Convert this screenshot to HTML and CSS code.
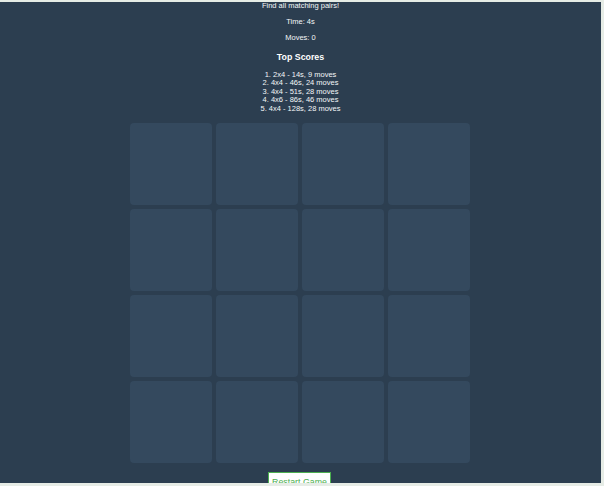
FILE: index.html
```html
<!DOCTYPE html>
<html lang="en">
<head>
<meta charset="utf-8">
<title>Memory Game</title>
<link rel="stylesheet" href="styles.css">
</head>
<body>
<div class="app">
  <p class="line first">Find all matching pairs!</p>
  <p class="line">Time: 4s</p>
  <p class="line">Moves: 0</p>
  <h3 class="scores-title">Top Scores</h3>
  <div class="scores">
    <div>1. 2x4 - 14s, 9 moves</div>
    <div>2. 4x4 - 46s, 24 moves</div>
    <div>3. 4x4 - 51s, 28 moves</div>
    <div>4. 4x6 - 86s, 46 moves</div>
    <div>5. 4x4 - 128s, 28 moves</div>
  </div>
  <div class="board">
    <div class="card"></div><div class="card"></div><div class="card"></div><div class="card"></div>
    <div class="card"></div><div class="card"></div><div class="card"></div><div class="card"></div>
    <div class="card"></div><div class="card"></div><div class="card"></div><div class="card"></div>
    <div class="card"></div><div class="card"></div><div class="card"></div><div class="card"></div>
  </div>
  <button class="restart">Restart Game</button>
</div>
</body>
</html>
```

FILE: styles.css
```css
html {
  background: #e6ece6;
  height: 100%;
}
body {
  margin: 2px 3px 0 0;
  height: 481px;
  overflow: hidden;
  background: #2c3e50;
  color: #f4f7f8;
  font-family: "Liberation Sans", Arial, sans-serif;
  font-size: 7.5px;
}
.app {
  display: flex;
  flex-direction: column;
  align-items: center;
  text-align: center;
}
.line {
  margin: 0 0 7.5px;
  line-height: 8.6px;
}
.scores-title {
  margin: 2px 0 8.3px;
  font-size: 8.8px;
  line-height: 10.1px;
  font-weight: bold;
  color: #ffffff;
}
.scores {
  line-height: 8.6px;
}
.board {
  margin: 9px 1px 0 0;
  display: grid;
  grid-template-columns: repeat(4, 82px);
  grid-auto-rows: 82px;
  gap: 4px;
}
.card {
  background: #34495e;
  border-radius: 4px;
}
.restart {
  margin: 9px 2px 0 0;
  background: #ffffff;
  color: #4caf50;
  border: 1px solid #4caf50;
  font-family: "Liberation Sans", Arial, sans-serif;
  font-size: 8.8px;
  padding: 4px 3px;
  line-height: 10px;
}
```
